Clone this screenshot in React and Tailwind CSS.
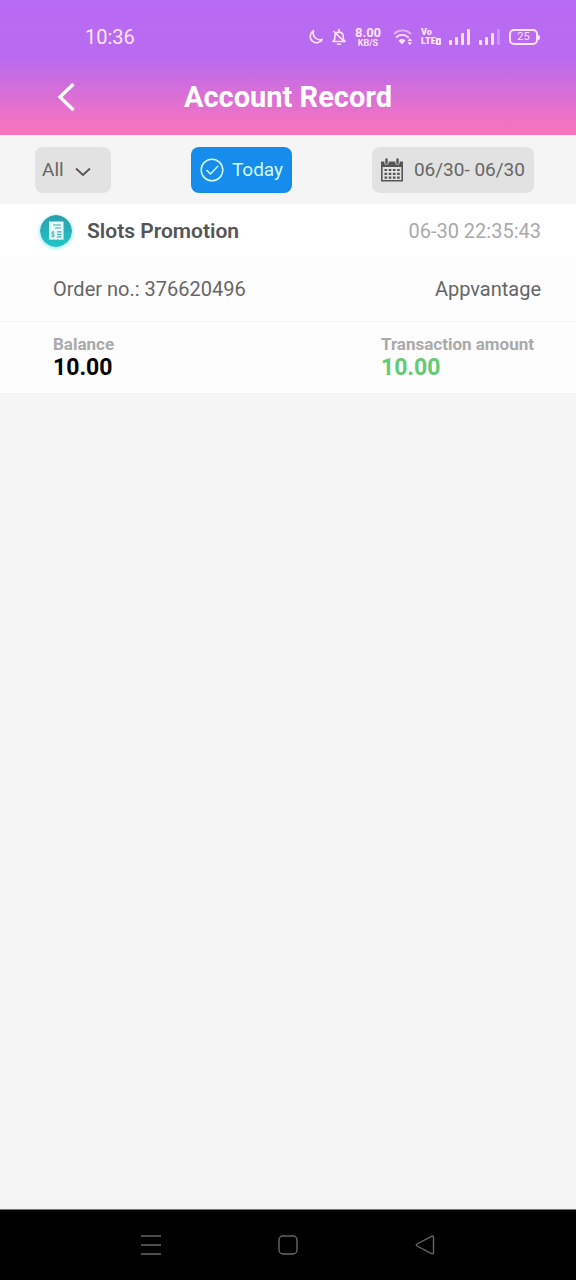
import React from 'react';

const records = [
  {
    title: 'Slots Promotion',
    time: '06-30 22:35:43',
    orderNo: '376620496',
    source: 'Appvantage',
    balance: '10.00',
    amount: '10.00',
  },
];

const SignalIcon = ({ weak = false }) => (
  <svg viewBox="0 0 22 18" className="h-[18px] w-[22px]" fill="currentColor">
    <rect x="0" y="12" width="3" height="5" rx="1" />
    <rect x="6" y="9" width="3" height="8" rx="1" />
    <rect x="12" y="5" width="3" height="12" rx="1" />
    <rect x="18" y="1" width="3" height="16" rx="1" opacity={weak ? 0.3 : 1} />
  </svg>
);

const StatusBar = () => (
  <div className="flex h-[60px] items-center justify-between pt-[14px] pr-9 pl-[85px] text-[#ffe3fb]">
    <span className="text-xl leading-6">10:36</span>
    <div className="flex items-center">
      <svg viewBox="0 0 16 16" className="mr-[7px] h-4 w-4" fill="none" stroke="currentColor" strokeWidth="1.7" strokeLinejoin="round">
        <path d="M5.500 1.800A6.400 6.400 0 1 0 14.200 10.500A7 7 0 0 1 5.500 1.800Z" />
      </svg>
      <svg viewBox="0 0 16 18" className="mr-[7px] h-[18px] w-4" fill="none" stroke="currentColor" strokeWidth="1.6" strokeLinecap="round" strokeLinejoin="round">
        <path d="M8 1.500v1.500M3.800 9V7.500a4.300 4.300 0 0 1 8.400 0v3.500l1.800 2.500H2l1.800-2.500V9M6.500 16.200h3M3 3.500L13 13.500" />
      </svg>
      <div className="mr-[11px] flex w-7 flex-col items-center font-bold">
        <span className="text-[13px] leading-[13px]">8.00</span>
        <span className="text-[9px] leading-[9px]">KB/S</span>
      </div>
      <svg viewBox="0 0 20 18" className="mr-2 h-[18px] w-5" fill="none" stroke="currentColor" strokeWidth="1.8" strokeLinecap="round">
        <path d="M1.500 5.500a12 12 0 0 1 16 0" opacity="0.6" />
        <path d="M3.500 9.200a8.500 8.500 0 0 1 11.500 0" />
        <path d="M5.500 12.500a5.600 5.600 0 0 1 7 0L9 16.500Z" fill="currentColor" stroke="none" />
        <path d="M14.500 13l2.300-3 2.300 3ZM14.500 14.300l2.300 3 2.300-3Z" fill="currentColor" stroke="none" />
      </svg>
      <div className="mr-2 w-5 text-[9px] leading-[9px] font-black">
        <div>Vo</div>
        <div className="flex items-center">
          LTE
          <span className="h-[7px] w-[5px] shrink-0 rounded-[1px] border-2 border-current" />
        </div>
      </div>
      <span className="mr-2"><SignalIcon /></span>
      <span className="mr-2"><SignalIcon weak /></span>
      <div className="flex items-center">
        <span className="flex h-4 w-[29px] items-center justify-center rounded-[5px] border-2 border-current text-[11px] leading-3">25</span>
        <span className="h-[5px] w-[2px] rounded-r bg-current" />
      </div>
    </div>
  </div>
);

const Header = () => (
  <header className="h-[135px] bg-[linear-gradient(180deg,#b86bf3_0%,#b96af0_42%,#fb74bb_100%)]">
    <StatusBar />
    <div className="grid h-[73px] grid-cols-[1fr_auto_1fr] items-center text-white">
      <button type="button" aria-label="Back" className="ml-14 w-6">
        <svg viewBox="0 0 24 32" className="h-8 w-6" fill="none" stroke="currentColor" strokeWidth="3.4">
          <path d="M17.500 3L4 16L17.500 29" />
        </svg>
      </button>
      <h1 className="text-[29px] leading-9 font-bold">Account Record</h1>
    </div>
  </header>
);

const CalendarIcon = () => (
  <svg viewBox="0 0 22 24" className="h-6 w-[22px] text-[#555]" fill="currentColor">
    <path d="M0 3.500h22V9H0Z" />
    <path d="M0.800 8v14.800h20.400V8" fill="none" stroke="currentColor" strokeWidth="1.600" />
    <path d="M5.500 2v2.500M16.500 2v2.500" stroke="#e2e2e2" strokeWidth="4.500" strokeLinecap="round" />
    <path d="M5.500 1.500v3.500M16.500 1.500v3.500" stroke="currentColor" strokeWidth="2.400" strokeLinecap="round" />
    <path d="M3.500 12h15.200M3.500 15.800h15.200M3.500 19.600h15.200" stroke="currentColor" strokeWidth="2.200" strokeDasharray="2.600 1.600" />
  </svg>
);

const Filters = () => (
  <div className="flex items-center justify-between pt-3 pr-[42px] pb-[11px] pl-[35px] text-[19px] leading-6 text-[#666]">
    <div className="relative">
      <select aria-label="Record type" className="block h-[46px] w-[76px] appearance-none rounded-lg bg-[#e2e2e2] pl-[7px]">
        <option>All</option>
      </select>
      <svg viewBox="0 0 16 10" className="pointer-events-none absolute top-5 right-5 h-[10px] w-4" fill="none" stroke="#555" strokeWidth="1.800">
        <path d="M1 1.500L8 8L15 1.500" />
      </svg>
    </div>
    <button type="button" className="flex h-[46px] items-center gap-2 rounded-lg bg-[#168dec] px-[9px] text-[#d5fbff]">
      <svg viewBox="0 0 24 24" className="h-6 w-6" fill="none" stroke="currentColor" strokeWidth="1.500">
        <circle cx="12" cy="12" r="10.800" />
        <path d="M6.500 12L10.500 16L18 8" />
      </svg>
      Today
    </button>
    <button type="button" className="flex h-[46px] items-center gap-[11px] rounded-lg bg-[#e2e2e2] px-[9px]">
      <CalendarIcon />
      06/30- 06/30
    </button>
  </div>
);

const ReceiptIcon = () => (
  <svg viewBox="0 0 32 32" className="h-8 w-8 rounded-full shadow-[0_1px_4px_#8be5e5]">
    <defs>
      <linearGradient id="receipt" x1="0" y1="0" x2="0" y2="1">
        <stop offset="0" stopColor="#2b9fac" />
        <stop offset="1" stopColor="#1fc6c8" />
      </linearGradient>
    </defs>
    <circle cx="16" cy="16" r="16" fill="url(#receipt)" />
    <path d="M9 6.500h14.500V25l-1.500-.8-2 .8-2-.8-2 .8-2-.8-2 .8-1.500-.8L9 25Z" fill="#e8ffff" />
    <path d="M13 10h8M15 13h6M17 16.800h4.500M17 19.300h4.500M17 21.800h4.500" stroke="#45a8ae" strokeWidth="1.200" />
    <path d="M14.300 17.600c-1-1-2.900-.6-2.700.7.200 1.200 2.800.9 2.800 2.100 0 1.400-2.100 1.500-3 .5M13 15.800v6.600" fill="none" stroke="#45a8ae" strokeWidth="0.900" />
  </svg>
);

const RecordCard = ({ record }) => (
  <article className="bg-[#fdfdfd] text-xl leading-6 text-[#666]">
    <div className="flex h-[53px] items-center bg-white pr-[35px] pl-10">
      <ReceiptIcon />
      <h2 className="ml-[15px] text-[21px] font-semibold text-[#555]">{record.title}</h2>
      <time className="ml-auto text-[#aaa]">{record.time}</time>
    </div>
    <div className="flex h-[65px] items-center justify-between border-b border-[#f3f3f3] pr-[35px] pb-px pl-[53px]">
      <span>Order no.: {record.orderNo}</span>
      <span>{record.source}</span>
    </div>
    <div className="flex justify-between pt-[10px] pr-[42px] pb-[13px] pl-[53px] font-bold">
      <div>
        <p className="text-[17px] leading-6 text-[#aaa]">Balance</p>
        <p className="text-[23px] leading-6 text-black">{record.balance}</p>
      </div>
      <div>
        <p className="text-[17px] leading-6 text-[#aaa]">Transaction amount</p>
        <p className="text-[23px] leading-6 text-[#63cb73]">{record.amount}</p>
      </div>
    </div>
  </article>
);

const SystemNav = () => (
  <nav className="flex h-[71px] items-center justify-center gap-[117px] border-t border-[#777] bg-black text-[#666]">
    <button type="button" aria-label="Recent apps">
      <svg viewBox="0 0 20 20" className="h-5 w-5" fill="none" stroke="currentColor" strokeWidth="1.500">
        <path d="M0 1h20M0 10h20M0 19h20" />
      </svg>
    </button>
    <button type="button" aria-label="Home">
      <svg viewBox="0 0 20 20" className="h-5 w-5" fill="none" stroke="currentColor" strokeWidth="1.400">
        <rect x="1" y="1" width="18" height="18" rx="4" />
      </svg>
    </button>
    <button type="button" aria-label="Back">
      <svg viewBox="0 0 20 20" className="h-5 w-5" fill="none" stroke="currentColor" strokeWidth="1.400" strokeLinejoin="round">
        <path d="M2 9L16.500 1.300Q18.500.5 18.500 2.500V17.500Q18.500 19.500 16.500 18.600L2 11Q.5 10 2 9Z" />
      </svg>
    </button>
  </nav>
);

export default function App() {
  return (
    <div className="flex min-h-screen flex-col bg-[#f5f5f5] font-['Roboto',sans-serif]">
      <Header />
      <main className="flex-1">
        <Filters />
        {records.map((record) => (
          <RecordCard key={record.orderNo} record={record} />
        ))}
      </main>
      <SystemNav />
    </div>
  );
}
